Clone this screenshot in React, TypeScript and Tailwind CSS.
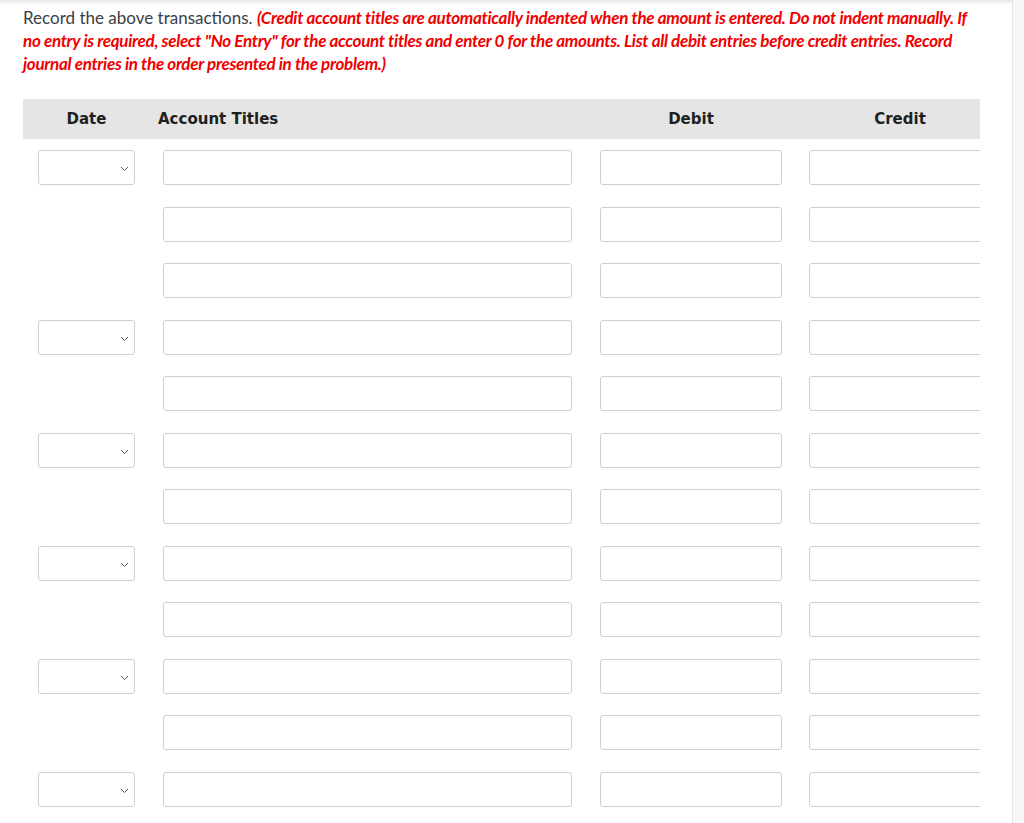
import React from 'react';

const rows = [true, false, false, true, false, true, false, true, false, true, false, true];

const Chevron = () => (
  <svg width="9" height="6" viewBox="0 0 9 6" className="absolute right-[5px] top-[15px]">
    <path d="M1 1 L4.5 4.5 L8 1" fill="none" stroke="#555" strokeWidth="1" />
  </svg>
);

const Box: React.FC<{ w: string }> = ({ w }) => (
  <div className={`${w} h-[35px] border border-[#cfcfcf] rounded-[3px] bg-white`}></div>
);

const App: React.FC = () => {
  return (
    <div className="flex h-[823px] overflow-hidden bg-white shadow-[inset_0_5px_4px_-3px_rgba(0,0,0,0.12)]">
      <div className="w-[1012px] shrink-0 pl-[23px] pt-[6px]">
        <p className="w-[957px] text-[17px] leading-[23px] text-[#3b4045] font-['Lato','Liberation_Sans',sans-serif]">
          Record the above transactions.{' '}
          <span className="italic font-bold text-[#f00000] tracking-[-0.3px]">
            (Credit account titles are automatically indented when the amount is entered. Do not indent manually. If
            no entry is required, select "No Entry" for the account titles and enter 0 for the amounts. List all debit
            entries before credit entries. Record journal entries in the order presented in the problem.)
          </span>
        </p>

        <div className="mt-[24px] w-[957px] overflow-hidden">
          <div className="w-[981px]">
            <div className="grid grid-cols-[127px_436px_210px_208px] h-[40px] items-center bg-[#e5e5e5] text-[15px] font-bold text-[#1f1f1f] font-['DejaVu_Sans',sans-serif]">
              <div className="text-center pt-[1px]">Date</div>
              <div className="pl-[8px] pt-[1px]">Account Titles</div>
              <div className="text-center pt-[1px]">Debit</div>
              <div className="text-center pt-[1px]">Credit</div>
            </div>

            <div className="pt-[11px]">
              {rows.map((hasDate, i) => (
                <div key={i} className="grid grid-cols-[127px_436px_210px_208px] h-[56.5px] items-start">
                  <div className="pl-[15px]">
                    {hasDate && (
                      <div className="relative w-[97px] h-[35px] border border-[#cfcfcf] rounded-[3px] bg-white">
                        <Chevron />
                      </div>
                    )}
                  </div>
                  <div className="pl-[13px]">
                    <Box w="w-[409px]" />
                  </div>
                  <div className="pl-[14px]">
                    <Box w="w-[182px]" />
                  </div>
                  <div className="pl-[13px]">
                    <Box w="w-[182px]" />
                  </div>
                </div>
              ))}
            </div>
          </div>
        </div>
      </div>
      <div className="flex-1 border-l border-[#e3e3e3] bg-[#f7f7f7]"></div>
    </div>
  );
};

export default App;
